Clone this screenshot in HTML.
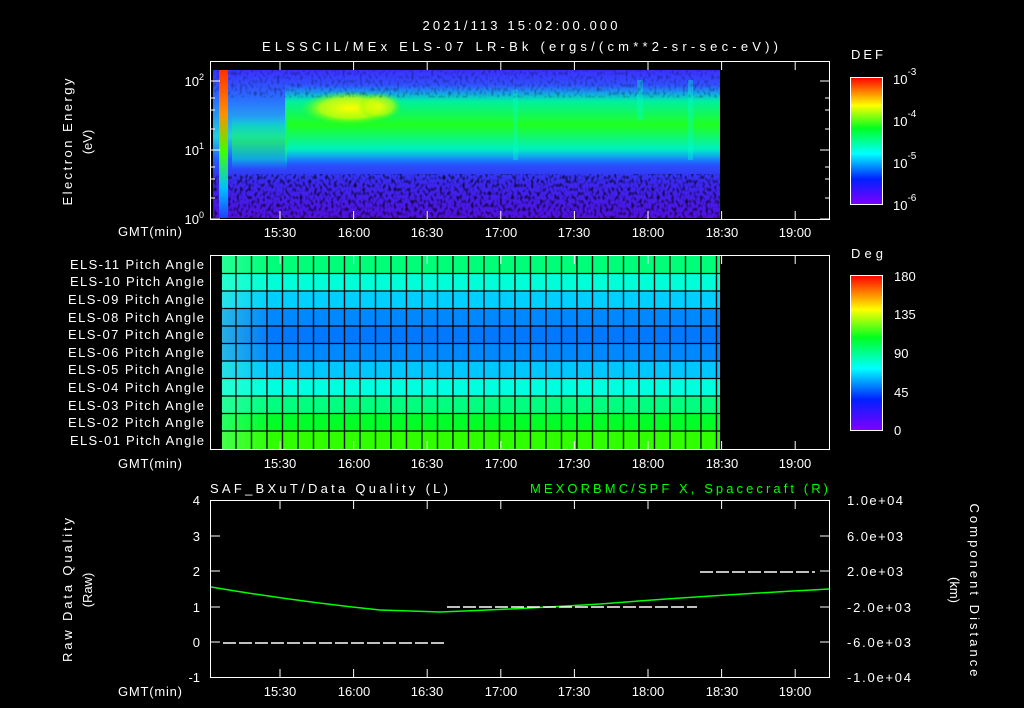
<!DOCTYPE html>
<html><head><meta charset="utf-8"><style>
html,body{margin:0;background:#000;}
svg{display:block}
text{font-family:"Liberation Sans","DejaVu Sans",sans-serif;fill:#fff;font-size:13px}
</style></head><body>
<svg width="1024" height="708" viewBox="0 0 1024 708" xmlns="http://www.w3.org/2000/svg">
<defs>
<linearGradient id="rb" x1="0" y1="1" x2="0" y2="0">
<stop offset="0" stop-color="#8000ff"/><stop offset="0.2" stop-color="#0020ff"/><stop offset="0.4" stop-color="#00ffff"/><stop offset="0.6" stop-color="#00ff20"/><stop offset="0.78" stop-color="#ffff00"/><stop offset="1" stop-color="#ff0000"/>
</linearGradient>
<linearGradient id="spec" x1="0" y1="0" x2="0" y2="1">
<stop offset="0" stop-color="#3a30ff"/><stop offset="0.2" stop-color="#2a70ff"/><stop offset="0.45" stop-color="#20d0e0"/><stop offset="0.6" stop-color="#2060ff"/><stop offset="0.75" stop-color="#3a28f0"/><stop offset="1" stop-color="#5010e0"/>
</linearGradient>
<linearGradient id="band" x1="0" y1="0" x2="0" y2="1">
<stop offset="0" stop-color="#00d0ff" stop-opacity="0"/><stop offset="0.2" stop-color="#00f0a0"/><stop offset="0.5" stop-color="#20ff20"/><stop offset="0.8" stop-color="#00f0c0"/><stop offset="1" stop-color="#00c0ff" stop-opacity="0"/>
</linearGradient>
<radialGradient id="yel" cx="0.5" cy="0.5" r="0.5">
<stop offset="0" stop-color="#ffff00"/><stop offset="0.6" stop-color="#d0ff00" stop-opacity="0.8"/><stop offset="1" stop-color="#40ff00" stop-opacity="0"/>
</radialGradient>
<linearGradient id="red" x1="0" y1="0" x2="0" y2="1">
<stop offset="0" stop-color="#ff3000"/><stop offset="0.3" stop-color="#ff9000"/><stop offset="0.55" stop-color="#40ff00"/><stop offset="0.8" stop-color="#00c0ff"/><stop offset="1" stop-color="#2040ff"/>
</linearGradient>
<linearGradient id="leftfade" x1="0" y1="0" x2="1" y2="0">
<stop offset="0" stop-color="#60ffc0" stop-opacity="0.4"/><stop offset="1" stop-color="#60ffc0" stop-opacity="0"/>
</linearGradient>
<filter id="noise"><feTurbulence type="fractalNoise" baseFrequency="0.35 0.25" numOctaves="1" seed="3"/><feColorMatrix values="0 0 0 0 0  0 0 0 0 0  0 0 0 0 0  0 0 0 -3 1.6"/></filter>
<pattern id="grid" x="2.8" y="0" width="15.5" height="700" patternUnits="userSpaceOnUse"><rect x="0" y="0" width="1.3" height="700" fill="#000"/></pattern>
</defs>

<text x="520" y="30" text-anchor="middle" font-size="16" textLength="195" lengthAdjust="spacing">2021/113 15:02:00.000</text>
<text x="520" y="51" text-anchor="middle" font-size="16" textLength="516" lengthAdjust="spacing">ELSSCIL/MEx ELS-07 LR-Bk  (ergs/(cm**2-sr-sec-eV))</text>

<!-- Panel 1 -->
<rect x="213" y="70" width="507" height="148" fill="url(#spec)"/>
<rect x="285" y="85" width="435" height="80" fill="url(#band)"/>
<rect x="232" y="115" width="55" height="55" fill="url(#band)" opacity="0.5"/>
<ellipse cx="350" cy="108" rx="50" ry="17" fill="url(#yel)"/>
<ellipse cx="380" cy="106" rx="22" ry="14" fill="url(#yel)" opacity="0.7"/>
<rect x="513" y="90" width="5" height="70" fill="#00ffd0" opacity="0.35"/>
<rect x="637" y="80" width="6" height="40" fill="#00ffd0" opacity="0.35"/>
<rect x="688" y="80" width="5" height="80" fill="#00ffd0" opacity="0.35"/>
<rect x="213" y="70" width="507" height="25" filter="url(#noise)" opacity="0.3"/>
<rect x="213" y="178" width="507" height="40" filter="url(#noise)" opacity="0.75"/>
<rect x="219" y="70" width="9" height="148" fill="url(#red)"/>
<rect x="210.5" y="61.5" width="619" height="158" fill="none" stroke="#fff"/>
<text x="204" y="86" text-anchor="end" font-size="14">10<tspan font-size="9" dy="-6">2</tspan></text>
<text x="204" y="155" text-anchor="end" font-size="14">10<tspan font-size="9" dy="-6">1</tspan></text>
<text x="204" y="224" text-anchor="end" font-size="14">10<tspan font-size="9" dy="-6">0</tspan></text>
<g stroke="#fff">
<path d="M210 81h10M210 150h10M210 219h10M830 81h-10M830 150h-10M830 219h-10M210 98h5M210 110h5M210 129h5M210 167h5M210 179h5M210 198h5M830 98h-5M830 110h-5M830 129h-5M830 167h-5M830 179h-5M830 198h-5"/>
</g>
<text transform="translate(72 142) rotate(-90)" text-anchor="middle" font-size="15" textLength="127" lengthAdjust="spacing">Electron Energy</text>
<text transform="translate(92 142) rotate(-90)" text-anchor="middle" font-size="15">(eV)</text>
<text x="118" y="236" font-size="14" textLength="64" lengthAdjust="spacing">GMT(min)</text>

<text x="851" y="59" font-size="16" textLength="32" lengthAdjust="spacing">DEF</text>
<rect x="850.5" y="77.5" width="32" height="127" fill="url(#rb)" stroke="#fff"/>
<text x="893" y="84" font-size="17">10<tspan font-size="10" dy="-9">-3</tspan></text>
<text x="893" y="126" font-size="17">10<tspan font-size="10" dy="-9">-4</tspan></text>
<text x="893" y="168" font-size="17">10<tspan font-size="10" dy="-9">-5</tspan></text>
<text x="893" y="210" font-size="17">10<tspan font-size="10" dy="-9">-6</tspan></text>

<!-- Panel 2 -->
<g>
<rect x="222" y="256" width="498" height="18" fill="#00ff78"/>
<rect x="222" y="274" width="498" height="17" fill="#00ffd8"/>
<rect x="222" y="291" width="498" height="18" fill="#00d0ff"/>
<rect x="222" y="309" width="498" height="17" fill="#0088ff"/>
<rect x="222" y="326" width="498" height="18" fill="#0078ff"/>
<rect x="222" y="344" width="498" height="17" fill="#0088ff"/>
<rect x="222" y="361" width="498" height="18" fill="#00c8ff"/>
<rect x="222" y="379" width="498" height="17" fill="#00ffe0"/>
<rect x="222" y="396" width="498" height="18" fill="#00ff80"/>
<rect x="222" y="414" width="498" height="18" fill="#00ff28"/>
<rect x="222" y="432" width="498" height="18" fill="#30ff00"/>
<rect x="222" y="256" width="50" height="194" fill="url(#leftfade)"/>
<rect x="222" y="256" width="498" height="194" fill="url(#grid)"/>
<path stroke="#000" stroke-width="1.3" d="M222 273.5h498M222 291h498M222 308.5h498M222 326h498M222 343.5h498M222 361h498M222 378.5h498M222 396h498M222 413.5h498M222 431h498"/>
</g>
<rect x="210.5" y="255.5" width="619" height="194" fill="none" stroke="#fff"/>
<g font-size="13.5" text-anchor="end">
<text x="204" y="269" textLength="134" lengthAdjust="spacing">ELS-11 Pitch Angle</text>
<text x="204" y="286" textLength="134" lengthAdjust="spacing">ELS-10 Pitch Angle</text>
<text x="204" y="304" textLength="136" lengthAdjust="spacing">ELS-09 Pitch Angle</text>
<text x="204" y="322" textLength="136" lengthAdjust="spacing">ELS-08 Pitch Angle</text>
<text x="204" y="339" textLength="136" lengthAdjust="spacing">ELS-07 Pitch Angle</text>
<text x="204" y="357" textLength="136" lengthAdjust="spacing">ELS-06 Pitch Angle</text>
<text x="204" y="374" textLength="136" lengthAdjust="spacing">ELS-05 Pitch Angle</text>
<text x="204" y="392" textLength="136" lengthAdjust="spacing">ELS-04 Pitch Angle</text>
<text x="204" y="410" textLength="136" lengthAdjust="spacing">ELS-03 Pitch Angle</text>
<text x="204" y="427" textLength="136" lengthAdjust="spacing">ELS-02 Pitch Angle</text>
<text x="204" y="445" textLength="134" lengthAdjust="spacing">ELS-01 Pitch Angle</text>
</g>
<text x="118" y="468" font-size="14" textLength="64" lengthAdjust="spacing">GMT(min)</text>
<text x="851" y="258" font-size="16" textLength="32" lengthAdjust="spacing">Deg</text>
<rect x="850.5" y="275.5" width="32" height="155" fill="url(#rb)" stroke="#fff"/>
<g font-size="16"><text x="894" y="281">180</text><text x="894" y="319">135</text><text x="894" y="358">90</text><text x="894" y="397">45</text><text x="894" y="435">0</text></g>

<!-- Panel 3 -->
<text x="210" y="493" font-size="16" textLength="238" lengthAdjust="spacing">SAF_BXuT/Data Quality (L)</text>
<text x="530" y="493" font-size="16" textLength="298" lengthAdjust="spacing" style="fill:#00ff00">MEXORBMC/SPF X, Spacecraft (R)</text>
<rect x="210.5" y="500.5" width="619" height="177" fill="none" stroke="#fff"/>
<g font-size="14" text-anchor="end"><text x="200" y="505">4</text><text x="200" y="541">3</text><text x="200" y="576">2</text><text x="200" y="612">1</text><text x="200" y="647">0</text><text x="200" y="682">-1</text></g>
<g font-size="13"><text x="847" y="505" textLength="56" lengthAdjust="spacing">1.0e+04</text><text x="847" y="541" textLength="56" lengthAdjust="spacing">6.0e+03</text><text x="847" y="576" textLength="56" lengthAdjust="spacing">2.0e+03</text><text x="847" y="612" textLength="64" lengthAdjust="spacing">-2.0e+03</text><text x="847" y="647" textLength="64" lengthAdjust="spacing">-6.0e+03</text><text x="847" y="682" textLength="64" lengthAdjust="spacing">-1.0e+04</text></g>
<path stroke="#fff" d="M210 536h10M210 571h10M210 607h10M210 642h10M830 536h-10M830 571h-10M830 607h-10M830 642h-10"/>
<path fill="none" stroke="#00ff00" stroke-width="1.5" d="M211 587Q300 602 380 610L440 612Q520 609 600 604Q700 596 829 589"/>
<path stroke="#fff" stroke-width="1.5" stroke-dasharray="13 3" d="M223 643H446M447 607H697M700 572H815"/>
<text transform="translate(72 590) rotate(-90)" text-anchor="middle" font-size="15" textLength="144" lengthAdjust="spacing">Raw Data Quality</text>
<text transform="translate(92 590) rotate(-90)" text-anchor="middle" font-size="15">(Raw)</text>
<text transform="translate(970 590) rotate(90)" text-anchor="middle" font-size="15" textLength="173" lengthAdjust="spacing">Component Distance</text>
<text transform="translate(950 590) rotate(90)" text-anchor="middle" font-size="15">(km)</text>
<text x="118" y="696" font-size="14" textLength="64" lengthAdjust="spacing">GMT(min)</text>

<g stroke="#fff">
<path d="M280 62v8M353.6 62v8M427.2 62v8M500.8 62v8M574.4 62v8M648 62v8M721.6 62v8M795.2 62v8M280 219v-8M353.6 219v-8M427.2 219v-8M500.8 219v-8M574.4 219v-8M648 219v-8M721.6 219v-8M795.2 219v-8"/>
<path d="M280 256v8M353.6 256v8M427.2 256v8M500.8 256v8M574.4 256v8M648 256v8M721.6 256v8M795.2 256v8M280 449v-8M353.6 449v-8M427.2 449v-8M500.8 449v-8M574.4 449v-8M648 449v-8M721.6 449v-8M795.2 449v-8"/>
<path d="M280 501v8M353.6 501v8M427.2 501v8M500.8 501v8M574.4 501v8M648 501v8M721.6 501v8M795.2 501v8M280 677v-8M353.6 677v-8M427.2 677v-8M500.8 677v-8M574.4 677v-8M648 677v-8M721.6 677v-8M795.2 677v-8"/>
</g>
<g font-size="14" text-anchor="middle">
<text x="280" y="237">15:30</text><text x="354" y="237">16:00</text><text x="427" y="237">16:30</text><text x="501" y="237">17:00</text><text x="574" y="237">17:30</text><text x="648" y="237">18:00</text><text x="722" y="237">18:30</text><text x="795" y="237">19:00</text>
<text x="280" y="468">15:30</text><text x="354" y="468">16:00</text><text x="427" y="468">16:30</text><text x="501" y="468">17:00</text><text x="574" y="468">17:30</text><text x="648" y="468">18:00</text><text x="722" y="468">18:30</text><text x="795" y="468">19:00</text>
<text x="280" y="696">15:30</text><text x="354" y="696">16:00</text><text x="427" y="696">16:30</text><text x="501" y="696">17:00</text><text x="574" y="696">17:30</text><text x="648" y="696">18:00</text><text x="722" y="696">18:30</text><text x="795" y="696">19:00</text>
</g>
</svg>
</body></html>
